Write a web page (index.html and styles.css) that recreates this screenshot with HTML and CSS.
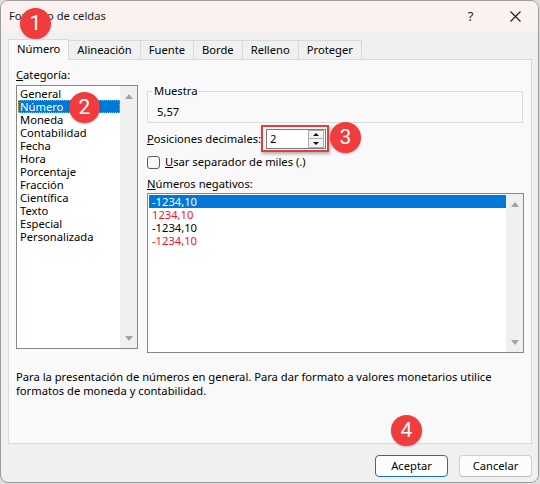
FILE: index.html
```html
<!DOCTYPE html>
<html lang="es">
<head>
<meta charset="utf-8">
<title>Formato de celdas</title>
<link rel="stylesheet" href="styles.css">
</head>
<body>
<div class="window">
  <div class="titlebar">
    <span class="title">Formato de celdas</span>
    <span class="caption-btn help">?</span>
    <span class="caption-btn close"><svg width="11" height="11" viewBox="0 0 11 11"><path d="M0.5 0.5L10.5 10.5M10.5 0.5L0.5 10.5" stroke="#1a1a1a" stroke-width="1.1" fill="none"/></svg></span>
  </div>
  <div class="body">
    <div class="tabs">
      <div class="tab active">Número</div>
      <div class="tab">Alineación</div>
      <div class="tab">Fuente</div>
      <div class="tab">Borde</div>
      <div class="tab">Relleno</div>
      <div class="tab">Proteger</div>
    </div>
    <div class="panel">
      <div class="columns">
        <div class="col-left">
          <div class="label"><u>C</u>ategoría:</div>
          <div class="listbox cat-list">
            <div class="items">
              <div class="item">General</div>
              <div class="item selected focus">Número</div>
              <div class="item">Moneda</div>
              <div class="item">Contabilidad</div>
              <div class="item">Fecha</div>
              <div class="item">Hora</div>
              <div class="item">Porcentaje</div>
              <div class="item">Fracción</div>
              <div class="item">Científica</div>
              <div class="item">Texto</div>
              <div class="item">Especial</div>
              <div class="item">Personalizada</div>
            </div>
            <div class="scrollbar">
              <span class="arrow up"></span>
              <span class="arrow down"></span>
            </div>
          </div>
        </div>
        <div class="col-right">
          <fieldset class="sample">
            <legend>Muestra</legend>
            <div class="sample-value">5,57</div>
          </fieldset>
          <div class="decimals-row">
            <span class="decimals-label"><u>P</u>osiciones decimales:</span>
            <div class="spin-wrap">
              <div class="spinbox">
                <span class="spin-value">2</span>
                <div class="spin-buttons">
                  <span class="spin-btn"><span class="tri up-tri"></span></span>
                  <span class="spin-btn"><span class="tri down-tri"></span></span>
                </div>
              </div>
              <div class="highlight"></div>
            </div>
          </div>
          <div class="check-row">
            <span class="checkbox"></span>
            <span><u>U</u>sar separador de miles (.)</span>
          </div>
          <div class="label neg-label"><u>N</u>úmeros negativos:</div>
          <div class="listbox neg-list">
            <div class="items">
              <div class="item selected">-1234,10</div>
              <div class="item red">1234,10</div>
              <div class="item">-1234,10</div>
              <div class="item red">-1234,10</div>
            </div>
            <div class="scrollbar">
              <span class="arrow up"></span>
              <span class="arrow down"></span>
            </div>
          </div>
        </div>
      </div>
      <p class="description">Para la presentación de números en general. Para dar formato a valores monetarios utilice formatos de moneda y contabilidad.</p>
    </div>
    <div class="footer">
      <button class="btn primary">Aceptar</button>
      <button class="btn">Cancelar</button>
    </div>
  </div>
  <span class="badge b1">1</span>
  <span class="badge b2">2</span>
  <span class="badge b3">3</span>
  <span class="badge b4">4</span>
</div>
</body>
</html>
```

FILE: styles.css
```css
* { box-sizing: border-box; }

html, body {
  margin: 0;
  padding: 0;
  background: #dedede;
}

body {
  font-family: "Noto Sans", "Open Sans", sans-serif;
  font-size: 11.2px;
  line-height: 14px;
  color: #000;
}

.window {
  position: relative;
  width: 539px;
  height: 483px;
  border: 1px solid #9c9c9c;
  border-radius: 8px;
  background: #f0f0f0;
  overflow: hidden;
  display: flex;
  flex-direction: column;
}

.titlebar {
  height: 30px;
  flex: none;
  background: #faf2ef;
  display: flex;
  align-items: center;
  padding-left: 8px;
}

.title {
  flex: 1;
  color: #1a1a1a;
  padding-bottom: 1px;
}

.caption-btn {
  width: 46px;
  height: 30px;
  display: flex;
  align-items: center;
  justify-content: center;
  color: #1a1a1a;
}

.help {
  font-size: 13px;
  padding-left: 3px;
}

.body {
  flex: 1;
  display: flex;
  flex-direction: column;
  padding: 8px 6px 0 7px;
}

.tabs {
  display: flex;
  align-items: flex-end;
  height: 20px;
  position: relative;
  z-index: 1;
}

.tab {
  height: 19px;
  padding: 0 8px;
  border: 1px solid #d9d9d9;
  border-bottom: none;
  background: #f0f0f0;
  display: flex;
  align-items: center;
  margin-left: -1px;
  padding-bottom: 1px;
}

.tab:first-child {
  margin-left: 0;
}

.tab.active {
  height: 21px;
  margin-bottom: -1px;
  background: #f9f9f9;
  padding-bottom: 2px;
}

.panel {
  height: 385px;
  flex: none;
  background: #f9f9f9;
  border: 1px solid #d9d9d9;
  padding: 8px 6px 0 7px;
}

.columns {
  display: grid;
  grid-template-columns: 122px 377px;
  column-gap: 9px;
  align-items: start;
}

.label {
  line-height: 14px;
}

.listbox {
  display: flex;
  background: #fff;
  border: 1px solid #828790;
}

.cat-list {
  margin-top: 3px;
  height: 264px;
}

.items {
  flex: 1;
  padding-top: 1px;
  padding-left: 1px;
}

.item {
  line-height: 13px;
  height: 13px;
  padding-left: 2px;
  white-space: nowrap;
}

.item.selected {
  background: #0078d7;
  color: #fff;
}

.item.focus {
  outline: 1px dotted #e2a23a;
  outline-offset: -1px;
}

.item.red {
  color: #f5102c;
}

.scrollbar {
  width: 17px;
  flex: none;
  background: #f0f0f0;
  display: flex;
  flex-direction: column;
  justify-content: space-between;
  align-items: center;
  padding: 8px 0 7px;
}

.arrow {
  width: 0;
  height: 0;
  border-left: 4px solid transparent;
  border-right: 4px solid transparent;
}

.arrow.up {
  border-bottom: 5px solid #a3a3a3;
}

.arrow.down {
  border-top: 5px solid #a3a3a3;
}

.sample {
  margin: 16px 1px 0 0;
  padding: 7px 4px 3px 4px;
  border: 1px solid #dcdcdc;
  min-width: 0;
}

.sample legend {
  padding: 0 2px;
  line-height: 14px;
}

.sample-value {
  padding-left: 5px;
}

.decimals-row {
  display: flex;
  align-items: center;
  margin-top: 6px;
  height: 20px;
}

.decimals-label {
  width: 119px;
  flex: none;
}

.spin-wrap {
  position: relative;
}

.spinbox {
  width: 60px;
  height: 20px;
  border: 1px solid #7a7a7a;
  background: #fff;
  display: flex;
  align-items: center;
  justify-content: space-between;
  padding: 0 1px 0 3px;
}

.spin-buttons {
  display: flex;
  flex-direction: column;
}

.spin-btn {
  width: 16px;
  height: 9px;
  border: 1px solid #adadad;
  background: #f4f4f4;
  display: flex;
  align-items: center;
  justify-content: center;
}

.spin-btn + .spin-btn {
  border-top: none;
}

.tri {
  width: 0;
  height: 0;
  border-left: 3px solid transparent;
  border-right: 3px solid transparent;
}

.up-tri {
  border-bottom: 3px solid #111;
}

.down-tri {
  border-top: 3px solid #111;
}

.highlight {
  position: absolute;
  left: -5px;
  top: -4px;
  right: -3px;
  bottom: -3px;
  border: 2px solid #e63c3c;
  box-shadow: 1px 2px 3px rgba(0, 0, 0, 0.3);
}

.check-row {
  display: flex;
  align-items: center;
  gap: 5px;
  margin-top: 6px;
  height: 14px;
}

.checkbox {
  width: 13px;
  height: 13px;
  border: 1px solid #5c5c5c;
  border-radius: 3px;
  background: #f7f7f7;
}

.neg-label {
  margin-top: 8px;
}

.neg-list {
  margin-top: 2px;
  height: 160px;
}

.neg-list .items {
  padding-left: 1px;
}

.neg-list .item {
  padding-left: 3px;
}

.description {
  margin: 17px 0 0 0;
  max-width: 500px;
  line-height: 14px;
}

.footer {
  display: flex;
  justify-content: flex-end;
  gap: 11px;
  margin-top: 11px;
}

.btn {
  width: 73px;
  height: 22px;
  font-family: inherit;
  font-size: 11.2px;
  line-height: 14px;
  color: #000;
  background: #fdfdfd;
  border: 1px solid #d0d0d0;
  border-bottom-color: #b8b8b8;
  border-radius: 4px;
  padding: 0;
}

.btn.primary {
  border: 1px solid #1a6fc4;
}

.badge {
  position: absolute;
  width: 31px;
  height: 31px;
  border-radius: 50%;
  background: #f03c3c;
  color: #fff;
  font-family: Roboto, "Liberation Sans", sans-serif;
  font-size: 21px;
  line-height: 31px;
  text-align: center;
  box-shadow: 0 1px 2px rgba(0, 0, 0, 0.25);
}

.b1 { left: 19px; top: 7px; }
.b2 { left: 68px; top: 91px; }
.b3 { left: 329px; top: 121px; }
.b4 { left: 390px; top: 414px; }
```
